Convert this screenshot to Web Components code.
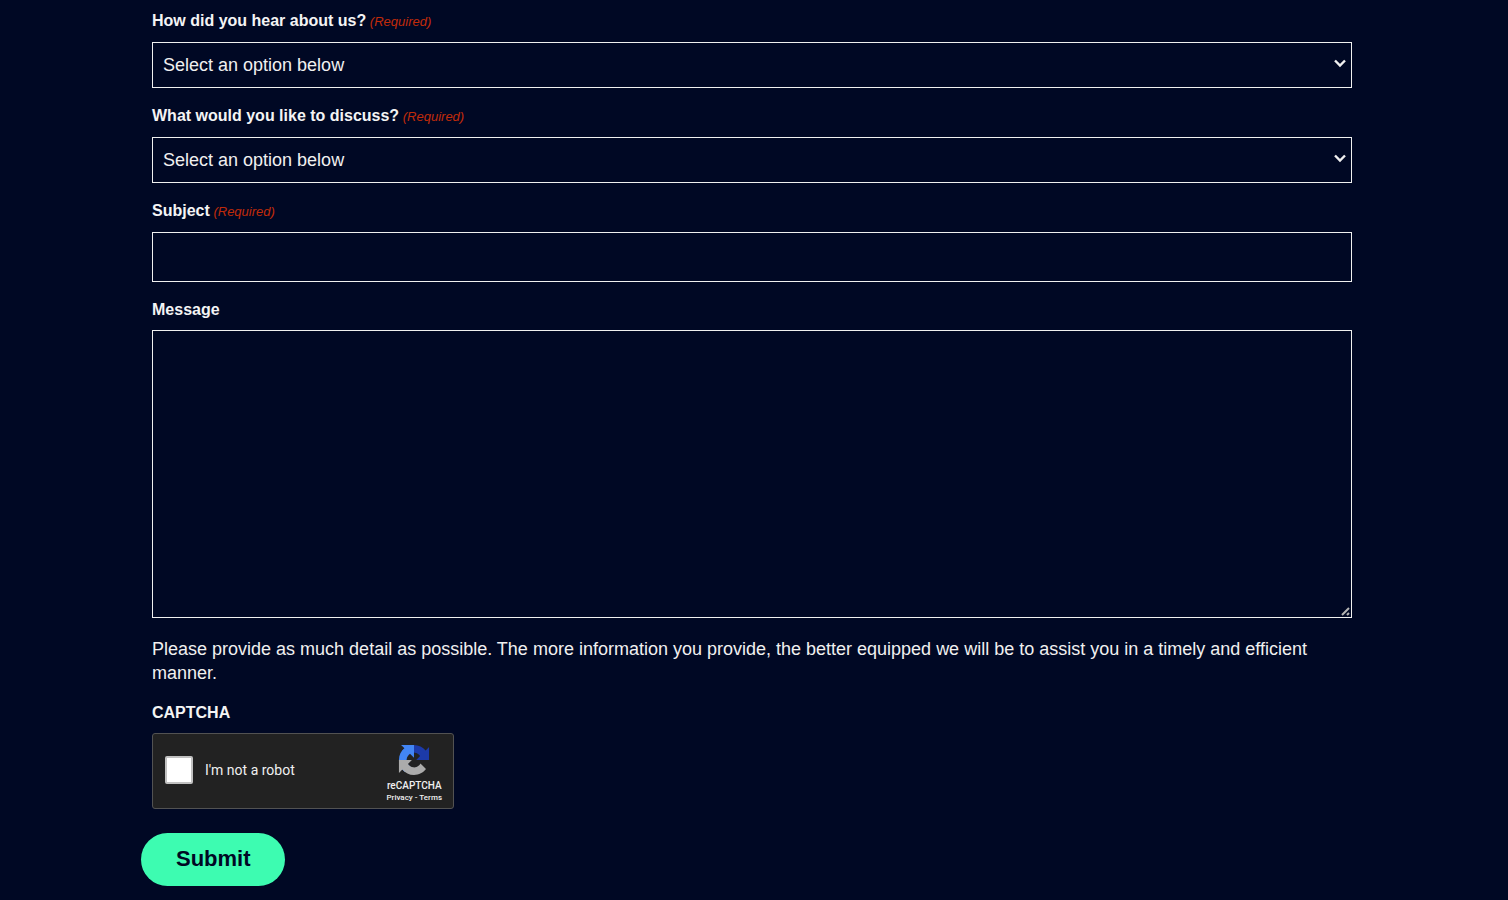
<!DOCTYPE html>
<html lang="en">
<head>
<meta charset="utf-8">
<meta name="viewport" content="width=device-width, initial-scale=1">
<title>Contact form</title>
<style>
    body {
        margin: 0;
        background-color: #000824;
        color: #f0f0f0;
        font-family: "Liberation Sans", Arial, sans-serif;
        font-size: 18px;
    }
</style>
</head>
<body>
<contact-form></contact-form>

<script>
    const labelStyles = `
        :host {
            display: block;
        }

        .label {
            display: block;
            margin-bottom: 8px;
            color: #f4f4f4;
            font-size: 16px;
            font-weight: 700;
            line-height: 24px;
        }

        .required {
            color: #c02b0a;
            font-size: 13px;
            font-style: italic;
            font-weight: 400;
            line-height: 16px;
        }

        :host([required]) .label {
            margin-bottom: 9px;
        }
    `;

    class FormField extends HTMLElement {
        connectedCallback() {
            const required = this.hasAttribute('required');
            this.attachShadow({ mode: 'open' });
            this.shadowRoot.innerHTML = `
                <style>
                    ${labelStyles}

                    .control {
                        position: relative;
                    }

                    select,
                    input,
                    textarea {
                        display: block;
                        box-sizing: border-box;
                        width: 100%;
                        margin: 0;
                        border: 1px solid #f0f0f0;
                        border-radius: 0;
                        background-color: transparent;
                        color: #f0f0f0;
                        font-family: inherit;
                        font-size: 18px;
                    }

                    select {
                        appearance: none;
                        height: 46px;
                        padding: 8px 24px 8px 10px;
                    }

                    option {
                        background-color: #000824;
                    }

                    input {
                        height: 50px;
                        padding: 8px 10px;
                    }

                    textarea {
                        height: 288px;
                        padding: 8px 10px;
                        resize: vertical;
                    }

                    textarea::-webkit-resizer {
                        background: transparent;
                    }

                    svg {
                        position: absolute;
                        fill: none;
                        pointer-events: none;
                    }

                    .chevron {
                        top: 16px;
                        right: 5px;
                        width: 14px;
                        height: 10px;
                        stroke: #f0f0f0;
                        stroke-width: 2.4;
                    }

                    .grip {
                        right: 2px;
                        bottom: 2px;
                        width: 9px;
                        height: 9px;
                        stroke: #b4b4b4;
                        stroke-width: 2;
                    }

                    ::slotted(p) {
                        margin: 19px 0 0;
                        line-height: 24px;
                    }
                </style>
                <label class="label" for="control">${this.getAttribute('label')}${required ? '<span class="required"> (Required)</span>' : ''}</label>
                <div class="control">${this.control(required ? 'required' : '')}</div>
                <slot></slot>
            `;
        }

        control(required) {
            switch (this.getAttribute('type')) {
                case 'select':
                    return `
                        <select id="control" ${required}><option value="">Select an option below</option></select>
                        <svg class="chevron" viewBox="0 0 14 10" aria-hidden="true"><path d="M2 2.5l5 5 5-5"/></svg>
                    `;
                case 'textarea':
                    return `
                        <textarea id="control" ${required}></textarea>
                        <svg class="grip" viewBox="0 0 9 9" aria-hidden="true"><path d="M1 8l7-7M6 8l2-2"/></svg>
                    `;
                default:
                    return `<input id="control" type="text" ${required}>`;
            }
        }
    }

    class CaptchaBox extends HTMLElement {
        connectedCallback() {
            this.attachShadow({ mode: 'open' });
            this.shadowRoot.innerHTML = `
                <style>
                    ${labelStyles}

                    .box {
                        display: flex;
                        align-items: center;
                        justify-content: space-between;
                        box-sizing: border-box;
                        width: 302px;
                        height: 76px;
                        padding: 0 11px 0 12px;
                        border: 1px solid #525252;
                        border-radius: 3px;
                        background-color: #222;
                        color: #f0f0f0;
                        font-family: Roboto, sans-serif;
                    }

                    .check {
                        display: flex;
                        align-items: center;
                        gap: 12px;
                        padding-bottom: 2px;
                        font-size: 14px;
                        line-height: 16px;
                    }

                    .check input {
                        appearance: none;
                        box-sizing: border-box;
                        width: 28px;
                        height: 28px;
                        margin: 0;
                        border: 2px solid #c1c1c1;
                        border-radius: 2px;
                        background-color: #fff;
                    }

                    .brand {
                        display: flex;
                        flex-direction: column;
                        align-items: center;
                        padding-top: 6px;
                        font-weight: 500;
                    }

                    .brand svg {
                        width: 32px;
                        height: 32px;
                        margin-bottom: 3px;
                    }

                    .name {
                        font-size: 10px;
                        line-height: 13px;
                    }

                    .links {
                        font-size: 8px;
                        line-height: 12px;
                    }

                    a {
                        color: inherit;
                        text-decoration: none;
                    }
                </style>
                <span class="label">CAPTCHA</span>
                <div class="box">
                    <label class="check"><input type="checkbox">I'm not a robot</label>
                    <div class="brand">
                        <svg viewBox="-2 -2 68 68" aria-hidden="true">
                            <path fill="#1c3aa9" d="M64 32V4.6l-7.2 7.2C50.9 4.6 42 0 32 0 21.500 0 12.300 5 6.500 12.700l11.700 11.900c1.200-2.200 2.800-4 4.800-5.400 2.100-1.600 5-2.900 9-2.900.5 0 .9.1 1.100.2 5 .4 9.300 3.100 11.900 7.100L36.700 32z"/>
                            <path fill="#4285f4" d="M32 0H4.500l7.200 7.200C4.500 13.100 0 22 0 32c0 10.400 5 19.700 12.600 25.500l11.900-11.800c-2.100-1.100-4-2.800-5.400-4.800-1.600-2-2.900-5-2.900-9 0-.5.1-.9.2-1.100.4-5 3.100-9.300 7.100-11.900l8.500 8.400z"/>
                            <path fill="#ababab" d="M0 32v27.400l7.200-7.200C13.100 59.400 22 64 32 64c10.400 0 19.700-5 25.500-12.700L45.800 39.400c-1.200 2.100-2.800 4-4.800 5.400-2 1.600-5 2.900-9 2.900-.5 0-.9-.1-1.100-.2-5-.4-9.300-3.100-11.800-7.100l8.400-8.400z"/>
                        </svg>
                        <div class="name">reCAPTCHA</div>
                        <div class="links"><a href="#">Privacy</a> - <a href="#">Terms</a></div>
                    </div>
                </div>
            `;
        }
    }

    class SubmitButton extends HTMLElement {
        connectedCallback() {
            this.attachShadow({ mode: 'open' });
            this.shadowRoot.innerHTML = `
                <style>
                    :host {
                        display: block;
                    }

                    button {
                        display: block;
                        height: 53px;
                        padding: 0 34px 2px 35px;
                        border: 0;
                        border-radius: 27px;
                        background-color: #3dfcb1;
                        color: #000824;
                        font-family: inherit;
                        font-size: 22px;
                        font-weight: 700;
                        cursor: pointer;
                    }
                </style>
                <button type="button"><slot></slot></button>
            `;
        }
    }

    class ContactForm extends HTMLElement {
        connectedCallback() {
            this.attachShadow({ mode: 'open' });
            this.shadowRoot.innerHTML = `
                <style>
                    :host {
                        display: block;
                        padding: 9px 156px 14px 152px;
                    }

                    form {
                        display: flex;
                        flex-direction: column;
                        gap: 16px;
                        max-width: 1200px;
                        margin: 0 auto;
                    }

                    submit-button {
                        margin: 8px 0 0 -11px;
                    }
                </style>
                <form>
                    <form-field type="select" label="How did you hear about us?" required></form-field>
                    <form-field type="select" label="What would you like to discuss?" required></form-field>
                    <form-field type="text" label="Subject" required></form-field>
                    <form-field type="textarea" label="Message">
                        <p>Please provide as much detail as possible. The more information you provide, the better equipped we will be to assist you in a timely and efficient manner.</p>
                    </form-field>
                    <captcha-box></captcha-box>
                    <submit-button>Submit</submit-button>
                </form>
            `;
        }
    }

    customElements.define('form-field', FormField);
    customElements.define('captcha-box', CaptchaBox);
    customElements.define('submit-button', SubmitButton);
    customElements.define('contact-form', ContactForm);
</script>
</body>
</html>
